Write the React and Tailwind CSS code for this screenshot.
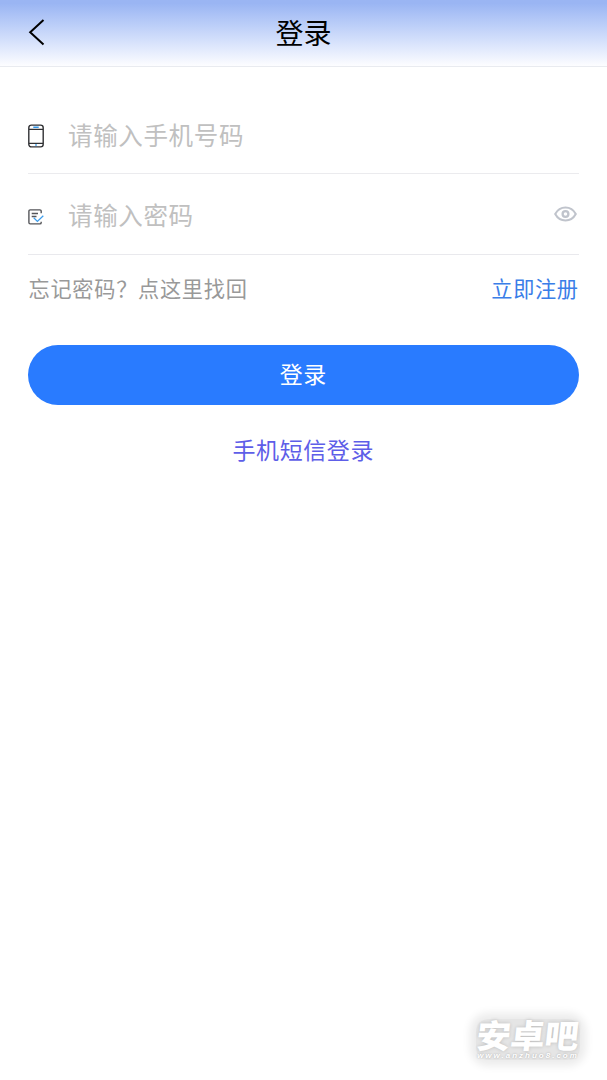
import React from "react";

function BackIcon() {
  return (
    <svg className="mb-[2px] block h-[28px] w-[18px]" viewBox="0 0 18 28" fill="none" stroke="#000" strokeWidth="2">
      <path d="M15.5 2 L2.2 14.3 L15.5 26.5" />
    </svg>
  );
}

function PhoneIcon() {
  return (
    <svg className="mt-[5px] block h-[24px] w-[16px] shrink-0" viewBox="0 0 16 24" fill="none">
      <rect x="0.8" y="1.1" width="14.4" height="21.8" rx="2.6" stroke="#303134" strokeWidth="1.4" />
      <path d="M1 5.4H15M1 19.3H15" stroke="#303134" strokeWidth="1.3" />
      <path d="M5.3 3.3H10.7M7.2 21.1H8.8" stroke="#3296e8" strokeWidth="1.5" />
    </svg>
  );
}

function PasswordIcon() {
  return (
    <svg className="mt-[5px] block h-[16px] w-[16px] shrink-0" viewBox="0 0 16 16" fill="none">
      <path d="M13.2 4.3V2.2Q13.2 .9 11.9 .9H2.2Q.9 .9 .9 2.2V13.6Q.9 14.9 2.2 14.9H11.9Q13.2 14.9 13.2 13.4V12.7" stroke="#55565a" strokeWidth="1.4" />
      <path d="M3.7 4.5H10M3.7 7.6H8.5" stroke="#55565a" strokeWidth="1.5" />
      <path d="M5.7 8.8L9.4 12.4L15.3 6.8" stroke="#3c9dec" strokeWidth="1.3" />
    </svg>
  );
}

function EyeIcon() {
  return (
    <svg className="block h-[16px] w-[23px]" viewBox="0 0 23 16" fill="none" stroke="#c0c4cc">
      <path d="M1.2 8C3.5 3.8 7 1.5 11.5 1.5S19.5 3.8 21.8 8C19.5 12.2 16 14.5 11.5 14.5S3.5 12.2 1.2 8Z" strokeWidth="2.1" strokeLinejoin="round" />
      <circle cx="11.5" cy="8" r="2.9" strokeWidth="2.3" />
    </svg>
  );
}

export default function App() {
  return (
    <div className="relative flex h-[1080px] w-full flex-col overflow-hidden bg-white font-['Noto_Sans_CJK_SC',sans-serif]">
      <header className="grid h-[67px] shrink-0 grid-cols-[1fr_auto_1fr] items-center border-b border-[#e9ebf0] bg-linear-to-b from-[#9ab5f3] from-5% to-[#fdfdff] px-7">
        <button aria-label="返回" className="justify-self-start"><BackIcon /></button>
        <h1 className="pb-[2px] text-[28px] leading-[40px] text-black">登录</h1>
      </header>

      <main className="flex flex-col pr-[28.5px] pl-7">
        <label className="mt-[26px] flex h-[81px] items-center border-b border-[#ebebee]">
          <PhoneIcon />
          <input aria-label="手机号码" placeholder="请输入手机号码" className="ml-6 h-10 min-w-0 flex-1 bg-transparent pt-[2px] text-[24.5px] tracking-[0.65px] outline-none placeholder:text-[#c0c0c0]" />
        </label>
        <label className="flex h-[81px] items-center border-b border-[#e9e9ed]">
          <PasswordIcon />
          <input type="text" aria-label="密码" placeholder="请输入密码" className="ml-6 h-10 min-w-0 flex-1 bg-transparent pt-[1px] text-[24.5px] tracking-[0.65px] outline-none placeholder:text-[#c0c0c0]" />
          <span className="mr-[1.5px] mb-[1px]"><EyeIcon /></span>
        </label>

        <div className="mt-[17px] flex h-8 items-center justify-between">
          <span className="pl-[0.5px] text-[21.2px] tracking-[0.72px] text-[#999999]">忘记密码？点这里找回</span>
          <a className="text-[21.2px] tracking-[0.6px] text-[#3a7ee8]">立即注册</a>
        </div>

        <button className="mt-[41px] flex h-[60px] w-full items-center justify-center rounded-full bg-[#297bff] pb-[3px] text-[23px] tracking-[0.5px] text-white">
          登录
        </button>
        <a className="mt-7 text-center text-[23px] leading-[33px] tracking-[0.6px] text-[#5e5ee8]">手机短信登录</a>
      </main>

      <div className="absolute right-[27px] bottom-[20px] flex w-[104px] flex-col items-center rounded-xl bg-black/10 text-white shadow-[0_0_9px_6px_rgba(0,0,0,0.08)]">
        <span className="-skew-x-6 scale-y-96 text-[34px] leading-[31px] font-black whitespace-nowrap text-shadow-[0_0_4px_rgba(0,0,0,0.18)]">安卓吧</span>
        <span className="mt-[2px] font-['Liberation_Sans',sans-serif] text-[8px] leading-[8px] font-bold tracking-[2px] whitespace-nowrap italic text-shadow-[0_0_2px_rgba(0,0,0,0.3)]">www.anzhuo8.com</span>
      </div>
    </div>
  );
}
